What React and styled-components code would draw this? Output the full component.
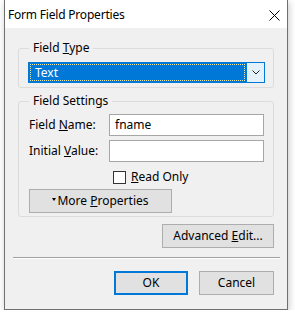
import React from "react";
import styled, { createGlobalStyle } from "styled-components";

const GlobalStyle = createGlobalStyle`
    html, body {
        margin: 0;
        padding: 0;
        background: #ffffff;
    }
    body {
        font-family: "Noto Sans", "Liberation Sans", sans-serif;
        font-size: 12px;
        line-height: 16px;
        color: #000;
    }
`;

const Window = styled.div`
    box-sizing: border-box;
    width: 284px;
    height: 310px;
    margin-left: 4px;
    border: 1px solid #707070;
    border-top: none;
    background: #f0f0f0;
    box-shadow: 1px 2px 7px rgba(0, 0, 0, 0.22);
    display: flex;
    flex-direction: column;
`;

const TitleBar = styled.div`
    height: 28px;
    background: #ffffff;
    display: flex;
    align-items: center;
    justify-content: space-between;
    padding: 0 7px 0 3px;
    flex-shrink: 0;
`;

const Title = styled.span`
    margin-top: 2px;
    letter-spacing: -0.2px;
`;

const Close = styled.svg`
    width: 11px;
    height: 11px;
    margin-top: 3px;
`;

const Body = styled.div`
    display: flex;
    flex-direction: column;
    padding: 12px 13px 0 13px;
`;

const Group = styled.fieldset`
    margin: ${(p) => p.$top || 0}px 0 0 0;
    padding: ${(p) => p.$pad};
    border: 1px solid #dcdcdc;
    border-radius: 3px;
    min-width: 0;
`;

const Legend = styled.legend`
    padding: 0 4px;
    margin-left: ${(p) => p.$shift}px;
    line-height: 16px;
`;

const Combo = styled.div`
    display: flex;
    height: 21px;
    box-sizing: border-box;
    border: 1px solid #0078d7;
`;

const ComboValue = styled.div`
    flex: 1;
    background: #0078d7;
    color: #ffffff;
    display: flex;
    align-items: center;
    padding-left: 6px;
    outline: 1px dotted #f3e7a6;
    outline-offset: -2px;
`;

const ComboButton = styled.div`
    width: 17px;
    background: #e5f1fb;
    border-left: 1px solid #0078d7;
    display: flex;
    align-items: center;
    justify-content: center;
`;

const Form = styled.div`
    display: grid;
    grid-template-columns: 80px 1fr;
    row-gap: 4px;
    align-items: center;
`;

const Label = styled.label``;

const Input = styled.div`
    box-sizing: border-box;
    height: 22px;
    border: 1px solid #a6a6a6;
    background: #ffffff;
    display: flex;
    align-items: center;
    padding-left: 5px;
`;

const CheckRow = styled.div`
    grid-column: 2;
    display: flex;
    align-items: center;
    gap: 5px;
    margin: 3px 0 0 4px;
    height: 16px;
`;

const Box = styled.span`
    box-sizing: border-box;
    width: 13px;
    height: 13px;
    border: 1px solid #333333;
    background: #ffffff;
`;

const Button = styled.div`
    box-sizing: border-box;
    width: ${(p) => p.$w}px;
    height: 24px;
    background: #e1e1e1;
    border: ${(p) => (p.$default ? "2px solid #0078d7" : "1px solid #adadad")};
    display: flex;
    align-items: center;
    justify-content: center;
    flex-shrink: 0;
`;

const MoreRow = styled.div`
    grid-column: 1 / span 2;
`;

const Caret = styled.span`
    width: 0;
    height: 0;
    border-left: 2px solid transparent;
    border-right: 2px solid transparent;
    border-top: 3px solid #000;
    margin-right: 1px;
    margin-top: -3px;
`;

const RightRow = styled.div`
    display: flex;
    justify-content: flex-end;
    gap: 11px;
    margin-top: ${(p) => p.$top}px;
`;

const Separator = styled.div`
    height: 1px;
    background: #a0a0a0;
    border-bottom: 1px solid #ffffff;
    margin: 9px -6px 0 -5px;
`;

export default function App() {
    return (
        <>
            <GlobalStyle />
            <Window>
                <TitleBar>
                    <Title>Form Field Properties</Title>
                    <Close viewBox="0 0 11 11">
                        <path d="M0.5 0.5 L10.5 10.5 M10.5 0.5 L0.5 10.5" stroke="#000" strokeWidth="1" fill="none" />
                    </Close>
                </TitleBar>
                <Body>
                    <Group $pad="6px 8px 4px 9px">
                        <Legend $shift={1}>Field <u>T</u>ype</Legend>
                        <Combo>
                            <ComboValue>Text</ComboValue>
                            <ComboButton>
                                <svg width="8" height="5" viewBox="0 0 8 5">
                                    <path d="M0.5 0.5 L4 4 L7.5 0.5" stroke="#222" strokeWidth="1" fill="none" />
                                </svg>
                            </ComboButton>
                        </Combo>
                    </Group>
                    <Group $top={5} $pad="5px 9px 3px 10px">
                        <Legend $shift={0}>Field Settings</Legend>
                        <Form>
                            <Label>Field <u>N</u>ame:</Label>
                            <Input>fname</Input>
                            <Label>Initial <u>V</u>alue:</Label>
                            <Input />
                            <CheckRow>
                                <Box />
                                <span><u>R</u>ead Only</span>
                            </CheckRow>
                            <MoreRow>
                                <Button $w={143}>
                                    <Caret />
                                    <span>More <u>P</u>roperties</span>
                                </Button>
                            </MoreRow>
                        </Form>
                    </Group>
                    <RightRow $top={7}>
                        <Button $w={112}>
                            <span>Advanced <u>E</u>dit...</span>
                        </Button>
                    </RightRow>
                    <Separator />
                    <RightRow $top={12}>
                        <Button $w={74} $default>OK</Button>
                        <Button $w={75}>Cancel</Button>
                    </RightRow>
                </Body>
            </Window>
        </>
    );
}
